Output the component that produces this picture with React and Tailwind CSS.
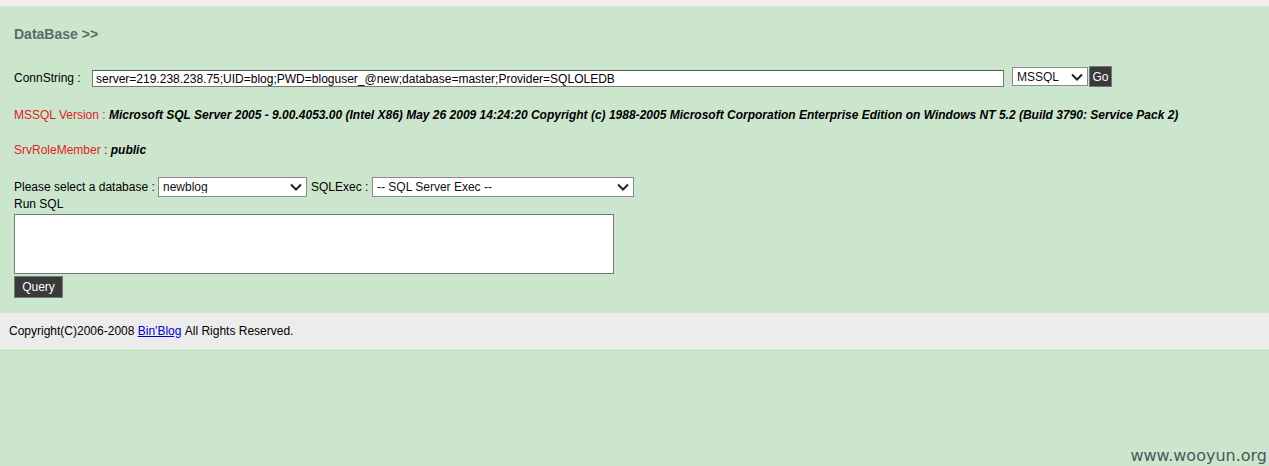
function Chevron() {
    return (
        <svg viewBox="0 0 12 8" className="w-[12px] h-[8px]" fill="none">
            <path d="M1 1.5L6 6.5L11 1.5" stroke="#222" strokeWidth="2" />
        </svg>
    );
}

function Select({value, className}) {
    return (
        <div className={"relative flex items-center bg-white border border-[#8a8a8a] pl-[4px] pr-[4px] justify-between " + className}>
            <span className="text-[12px] leading-none text-[#111] truncate">{value}</span>
            <Chevron />
        </div>
    );
}

export default function App() {
    return (
        <div className="relative h-[466px] overflow-hidden bg-[#cce6ce] font-['Liberation_Sans',Arial,sans-serif] text-[12px] text-black">

            <div className="h-[6px] bg-[#f2eef0]"></div>

            <div className="px-[14px] pt-[20px] pb-[15px]">

                <h2 className="text-[14px] font-bold leading-[16px] text-[#5a6b6b]">DataBase &gt;&gt;</h2>

                <div className="flex items-start mt-[24px]">
                    <span className="w-[78px] mt-[5px] leading-[15px]">ConnString :</span>
                    <div className="w-[912px] h-[17px] mt-[4px] bg-white border border-[#777] border-t-[#555] flex items-center px-[3px] leading-none">
                        server=219.238.238.75;UID=blog;PWD=bloguser_@new;database=master;Provider=SQLOLEDB
                    </div>
                    <Select value="MSSQL" className="w-[76px] h-[19px] mt-[1px] ml-[8px]" />
                    <button className="w-[23px] h-[21px] ml-[1px] bg-[#3a3a3a] border border-[#777] text-white text-[12px] leading-none">Go</button>
                </div>

                <p className="mt-[21px] leading-[14px]">
                    <span className="text-[#dd2222]">MSSQL Version : </span>
                    <b><i>Microsoft SQL Server 2005 - 9.00.4053.00 (Intel X86) May 26 2009 14:24:20 Copyright (c) 1988-2005 Microsoft Corporation Enterprise Edition on Windows NT 5.2 (Build 3790: Service Pack 2)</i></b>
                </p>

                <p className="mt-[21px] leading-[14px]">
                    <span className="text-[#dd2222]">SrvRoleMember</span> : <b><i>public</i></b>
                </p>

                <div className="flex items-center mt-[20px] h-[20px]">
                    <span className="w-[144px]">Please select a database :</span>
                    <Select value="newblog" className="w-[149px] h-[20px]" />
                    <span className="ml-[4px] w-[61px]">SQLExec :</span>
                    <Select value="-- SQL Server Exec --" className="w-[262px] h-[20px]" />
                </div>

                <div className="leading-[14px]">Run SQL</div>

                <div className="mt-[3px] w-[600px] h-[60px] bg-white border border-[#777]"></div>

                <button className="mt-[2px] w-[49px] h-[22px] bg-[#3a3a3a] border border-[#777] text-white text-[12px] leading-none">Query</button>
            </div>

            <div className="h-[36px] bg-[#ececec] border-b border-[#f6f6f6] flex items-center px-[9px]">
                Copyright(C)2006-2008&nbsp;<a href="#" className="text-[#0000cc] underline">Bin'Blog</a>&nbsp;All Rights Reserved.
            </div>

            <div className="absolute right-[2px] bottom-[0px] font-['DejaVu_Sans',sans-serif] text-[16px] text-[#4a5858] leading-[20px]">www.wooyun.org</div>
        </div>
    );
}
